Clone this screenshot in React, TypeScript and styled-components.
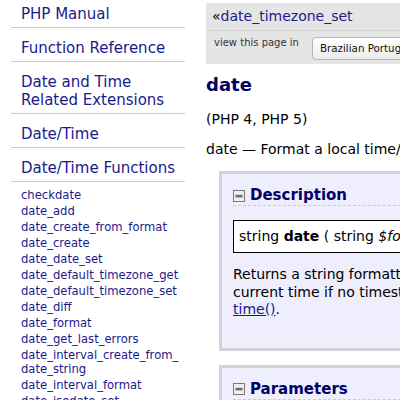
import React from "react";
import styled, { createGlobalStyle } from "styled-components";

const GlobalStyle = createGlobalStyle`
  html, body {
    margin: 0;
    padding: 0;
    background: #ffffff;
    overflow: hidden;
  }
  body {
    font-family: "DejaVu Sans", Verdana, sans-serif;
    color: #000000;
  }
`;

const Page = styled.div`
  display: flex;
  width: 400px;
  height: 400px;
  overflow: hidden;
`;

const Sidebar = styled.nav`
  flex: 0 0 196px;
  box-sizing: border-box;
  padding-left: 11px;
`;

const NavList = styled.ul`
  list-style: none;
  margin: -6px 0 0;
  padding: 0;
  width: 174px;
`;

const NavItem = styled.li`
  border-bottom: 1px solid #cccccc;
  padding: 11px 0 4px 10px;
  font-size: 15px;
  line-height: 18px;
`;

const NavLink = styled.a`
  color: #1a1a8c;
  text-decoration: none;
`;

const FuncList = styled.ul`
  list-style: none;
  margin: 0;
  padding: 6px 0 0 10px;
  width: 164px;
`;

const FuncItem = styled.li`
  font-size: 11.6px;
  line-height: 14px;
  margin-bottom: 2px;
  white-space: nowrap;
`;

const Main = styled.main`
  flex: 0 0 600px;
  margin-left: 10px;
  padding-top: 3px;
`;

const NavBox = styled.div`
  background: #e5e5e5;
`;

const PrevRow = styled.div`
  height: 27px;
  padding-left: 6px;
  font-size: 14px;
  line-height: 27px;
  border-bottom: 1px solid #d2d2d2;
`;

const Guillemet = styled.span`
  color: #000000;
`;

const LangRow = styled.div`
  display: flex;
  align-items: flex-start;
  padding: 6px 0 4px 8px;
`;

const LangLabel = styled.span`
  flex: 0 0 98px;
  font-size: 10px;
  line-height: 12px;
  color: #333333;
`;

const SelectBox = styled.div`
  box-sizing: border-box;
  width: 200px;
  height: 23px;
  border: 1px solid #b4b4b4;
  border-radius: 4px;
  background: linear-gradient(#ffffff, #ececec);
  font-size: 10.3px;
  line-height: 21px;
  padding-left: 7px;
  color: #111111;
`;

const Title = styled.h1`
  margin: 9px 0 0;
  font-size: 18px;
  line-height: 24px;
  font-weight: bold;
  color: #000066;
`;

const Versions = styled.p`
  margin: 14px 0 0;
  font-size: 14px;
  line-height: 16px;
`;

const RefPurpose = styled.p`
  margin: 14px 0 0;
  font-size: 14px;
  line-height: 16px;
  white-space: nowrap;
`;

const Section = styled.section`
  margin: 14px 0 0 13px;
  border: 3px solid #d2d2da;
  background: #eeeefc;
  padding: 12px 0 29px 11px;
`;

const SectionHead = styled.h3`
  display: flex;
  align-items: center;
  gap: 5px;
  margin: 0;
  font-size: 15px;
  line-height: 19px;
  font-weight: bold;
  color: #000066;
  border-bottom: 1px dashed #c9c9dd;
`;

const CodeBox = styled.div`
  margin-top: 14px;
  border: 1px solid #000000;
  background: #ffffff;
  padding: 7px 5px;
  font-size: 14px;
  line-height: 17px;
  white-space: nowrap;
`;

const Para = styled.p`
  margin: 13px 0 0;
  font-size: 14px;
  line-height: 17.5px;
  white-space: nowrap;
`;

const FuncLink = styled.a`
  color: #1a1a8c;
  text-decoration: underline;
`;

const Toggle = () => (
  <svg width="12" height="12" viewBox="0 0 12 12" style={{ flex: "0 0 12px" }}>
    <rect x="0.5" y="0.5" width="11" height="11" fill="#eeeeee" stroke="#7a7a7a" />
    <rect x="2.5" y="4.8" width="7" height="2.6" fill="#6e6e6e" />
  </svg>
);

const navItems = [
  "PHP Manual",
  "Function Reference",
  "Date and Time Related Extensions",
  "Date/Time",
  "Date/Time Functions",
];

const funcs = [
  "checkdate",
  "date_add",
  "date_create_from_format",
  "date_create",
  "date_date_set",
  "date_default_timezone_get",
  "date_default_timezone_set",
  "date_diff",
  "date_format",
  "date_get_last_errors",
  "date_interval_create_from_date_string",
  "date_interval_format",
  "date_isodate_set",
  "date_modify",
];

export default function App() {
  return (
    <>
      <GlobalStyle />
      <Page>
        <Sidebar>
          <NavList>
            {navItems.map((n) => (
              <NavItem key={n}>
                <NavLink href="#">
                  {n === "Date and Time Related Extensions" ? (
                    <>
                      Date and Time
                      <br />
                      Related Extensions
                    </>
                  ) : (
                    n
                  )}
                </NavLink>
              </NavItem>
            ))}
          </NavList>
          <FuncList>
            {funcs.map((f) => (
              <FuncItem key={f}>
                <NavLink href="#">
                  {f === "date_interval_create_from_date_string" ? (
                    <>
                      date_interval_create_from_
                      <br />
                      date_string
                    </>
                  ) : (
                    f
                  )}
                </NavLink>
              </FuncItem>
            ))}
          </FuncList>
        </Sidebar>
        <Main>
          <NavBox>
            <PrevRow>
              <Guillemet>«</Guillemet>
              <NavLink href="#">date_timezone_set</NavLink>
            </PrevRow>
            <LangRow>
              <LangLabel>view this page in</LangLabel>
              <SelectBox>Brazilian Portuguese</SelectBox>
            </LangRow>
          </NavBox>
          <Title>date</Title>
          <Versions>(PHP 4, PHP 5)</Versions>
          <RefPurpose>date — Format a local time/date</RefPurpose>
          <Section>
            <SectionHead>
              <Toggle />
              Description
            </SectionHead>
            <CodeBox>
              string <b>date</b> ( string <i>$format</i> [, int <i>$timestamp</i> = time() ] )
            </CodeBox>
            <Para>
              Returns a string formatted according to the given format string using the given integer
              timestamp or the
              <br />
              current time if no timestamp is given. In other words, timestamp is optional and defaults
              to the value of
              <br />
              <FuncLink href="#">time()</FuncLink>.
            </Para>
          </Section>
          <Section>
            <SectionHead>
              <Toggle />
              Parameters
            </SectionHead>
          </Section>
        </Main>
      </Page>
    </>
  );
}
